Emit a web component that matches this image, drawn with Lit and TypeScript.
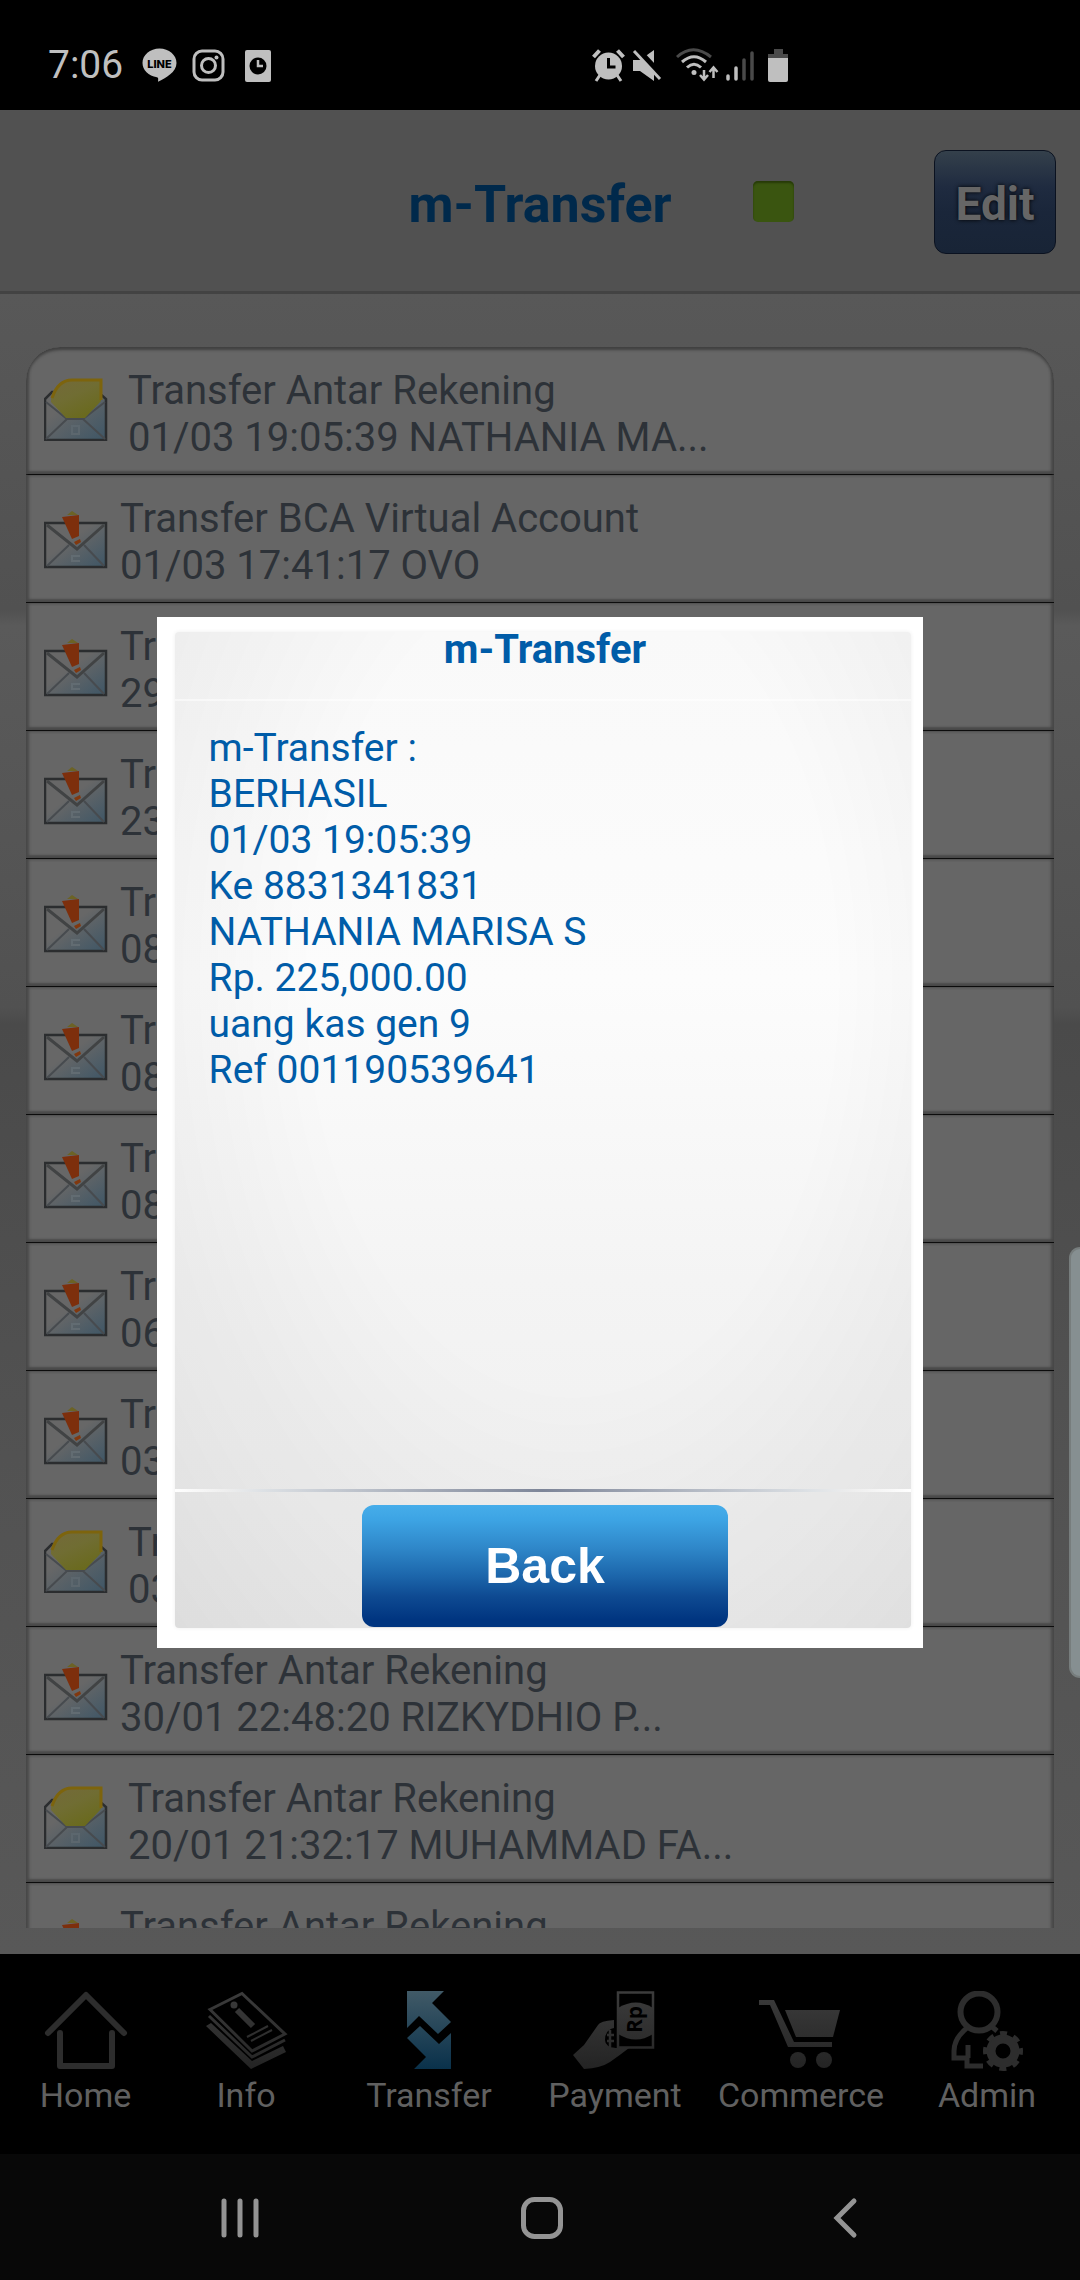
import { LitElement, html, css, svg } from "lit";
import { customElement, property } from "lit/decorators.js";

interface Entry {
  title: string;
  detail: string;
  opened?: boolean;
}

const ENTRIES: Entry[] = [
  { title: "Transfer Antar Rekening", detail: "01/03 19:05:39 NATHANIA MA...", opened: true },
  { title: "Transfer BCA Virtual Account", detail: "01/03 17:41:17 OVO" },
  { title: "Transfer", detail: "29/02" },
  { title: "Transfer", detail: "23/02" },
  { title: "Transfer", detail: "08/02" },
  { title: "Transfer", detail: "08/02" },
  { title: "Transfer", detail: "08/02" },
  { title: "Transfer", detail: "06/02" },
  { title: "Transfer", detail: "03/02" },
  { title: "Transfer", detail: "03/02", opened: true },
  { title: "Transfer Antar Rekening", detail: "30/01 22:48:20 RIZKYDHIO P..." },
  { title: "Transfer Antar Rekening", detail: "20/01 21:32:17 MUHAMMAD FA...", opened: true },
  { title: "Transfer Antar Rekening", detail: "" },
];

const RECEIPT = [
  "m-Transfer :",
  "BERHASIL",
  "01/03 19:05:39",
  "Ke 8831341831",
  "NATHANIA MARISA S",
  "Rp. 225,000.00",
  "uang kas gen 9",
  "Ref 001190539641",
];

/* ---------- status bar ---------- */

@customElement("status-bar")
export class StatusBar extends LitElement {
  static styles = css`
    :host {
      display: block;
      background: #000;
      color: #bfbfbf;
    }
    .bar {
      display: flex;
      align-items: center;
      height: 110px;
      padding: 20px 48px 0;
      box-sizing: border-box;
      font: 39px/40px Roboto, sans-serif;
    }
    .time {
      width: 94px;
    }
    .apps {
      display: flex;
      gap: 15px;
      width: 450px;
    }
    .system {
      display: flex;
      align-items: center;
      gap: 7px;
    }
    .wifi {
      margin-left: 7px;
    }
    .battery {
      margin-left: 6px;
    }
    svg {
      display: block;
    }
  `;

  render() {
    return html`
      <div class="bar">
        <span class="time">7:06</span>
        <div class="apps">
          <svg width="35" height="34" viewBox="0 0 35 34">
            <path fill="#bfbfbf" d="M17.500 .5C8 .5.500 7 .500 15c0 7 6 13 14.500 14.200 1.500.3 1.300 1.600 1 4.500C24 30 34.500 24 34.500 15 34.500 7 27 .5 17.500.5z" />
            <text x="17.500" y="19.500" text-anchor="middle" font-family="Inter, sans-serif" font-weight="800" font-size="11" fill="#000">LINE</text>
          </svg>
          <svg width="33" height="34" viewBox="0 0 33 34" fill="none" stroke="#bfbfbf">
            <rect x="2" y="3" width="29" height="29" rx="8" stroke-width="3" />
            <circle cx="16.500" cy="17.500" r="7" stroke-width="3" />
            <circle cx="24.500" cy="9.500" r="2" fill="#bfbfbf" stroke="none" />
          </svg>
          <svg width="36" height="34" viewBox="0 0 36 34">
            <rect x="5" y="2" width="26" height="32" rx="2" fill="#bfbfbf" />
            <circle cx="18" cy="18" r="8.500" fill="#000" />
            <path d="M18 12v6h5" fill="none" stroke="#bfbfbf" stroke-width="2.500" />
          </svg>
        </div>
        <div class="system">
          <svg width="33" height="34" viewBox="0 0 33 34" fill="none" stroke="#bfbfbf">
            <circle cx="16.500" cy="18" r="13.500" fill="#bfbfbf" stroke="none" />
            <path d="M1.500 9l6-6.500M31.500 9l-6-6.500" stroke-width="4" />
            <path d="M8 27l-4 6M25 27l4 6" stroke-width="3" />
            <path d="M16.500 10v9h7" stroke="#000" stroke-width="3" />
          </svg>
          <svg width="30" height="34" viewBox="0 0 30 34">
            <path d="M1 12h7L22 2v31L8 23H1z" fill="#bfbfbf" />
            <path d="M3 -1L31 29" stroke="#000" stroke-width="6" />
            <path d="M2 3L28 31" stroke="#bfbfbf" stroke-width="3" />
          </svg>
          <svg class="wifi" width="43" height="34" viewBox="0 0 43 34" fill="none" stroke="#bfbfbf" stroke-width="3">
            <path d="M1 9q16-14.500 34 0" stroke="#4a4a4a" />
            <path d="M6 14q12-10.500 24 0M11 19.500q7-6.500 14 0" />
            <circle cx="18" cy="24.500" r="2.500" fill="#bfbfbf" stroke="none" />
            <path d="M28 22v9M24 27l4 4.500 4-4.500M37.500 30v-10M33.500 24l4-4.500 4 4.500" stroke-width="2.500" />
          </svg>
          <svg width="28" height="34" viewBox="0 0 28 34" fill="none" stroke-width="3.500" stroke-linecap="round">
            <path d="M2 28v3M10 20v11" stroke="#bfbfbf" />
            <path d="M18 12v19M26 5v26" stroke="#4a4a4a" />
          </svg>
          <svg class="battery" width="22" height="34" viewBox="0 0 22 34">
            <path d="M7 1h9v5h5v6H1V6h6z" fill="#4a4a4a" />
            <path d="M1 10h20v22q0 2-2 2H3q-2 0-2-2z" fill="#bfbfbf" />
          </svg>
        </div>
      </div>
    `;
  }
}

/* ---------- history row ---------- */

@customElement("history-row")
export class HistoryRow extends LitElement {
  @property({ attribute: false }) entry!: Entry;

  static styles = css`
    :host {
      display: block;
    }
    .row {
      display: flex;
      align-items: flex-end;
      width: 100%;
      height: 128px;
      padding: 0 18px 13px;
      box-sizing: border-box;
      border: 0;
      border-bottom: 1px solid #0c0c0c;
      background: #666;
      box-shadow: inset 3px 0 3px #484848, inset -3px 0 3px #484848, inset 0 -3px 2px #4c4c4c;
      color: #2d3238;
      text-align: left;
      font: 40px/47px Roboto, sans-serif;
    }
    .icon {
      display: block;
      flex: none;
      margin-bottom: 20px;
    }
    .text {
      padding-left: 12px;
      white-space: pre;
    }
    .opened .text {
      padding-left: 20px;
    }
    .text span {
      display: block;
      height: 47px;
    }
  `;

  private closedIcon() {
    return svg`
      <linearGradient id="paper" x1="0" y1="0" x2="1" y2="1">
        <stop offset="0.400" stop-color="#676767" /><stop offset="1" stop-color="#3e5666" />
      </linearGradient>
      <rect x="1" y="17" width="61" height="44" fill="url(#paper)" stroke="#2b2d2f" stroke-width="2.500" />
      <path d="M3 60l22-21M60 60L40 39" stroke="#474b4f" stroke-width="2" />
      <path d="M3 19l30 24 27-24" fill="none" stroke="#414344" stroke-width="3" />
      <path d="M36 50h-8v5h8" fill="none" stroke="#626c72" stroke-width="2" />
      <path d="M23 9l5-4 6 4z" fill="#6c6325" />
      <path d="M18 11l17-2v21l-7 3z" fill="#7d2f0c" />
      <path d="M30 36l6-3 1 3-5 3z" fill="#81380f" />
    `;
  }

  private openIcon() {
    return svg`
      <linearGradient id="paper" x1="0" y1="0" x2="1" y2="1">
        <stop offset="0.300" stop-color="#676767" /><stop offset="1" stop-color="#3e5666" />
      </linearGradient>
      <linearGradient id="flap" x1="0" y1="0" x2="0.600" y2="1">
        <stop offset="0" stop-color="#74693a" /><stop offset="0.500" stop-color="#706d33" /><stop offset="1" stop-color="#6a6a1e" />
      </linearGradient>
      <path d="M1 62V21l7-7h46l8 7v41z" fill="url(#paper)" stroke="#2b2d2f" stroke-width="2.500" />
      <path d="M2 24l21 17h16l22-17M2 61l21-20M61 61L39 41" fill="none" stroke="#474b4f" stroke-width="2" />
      <path d="M7 20Q12 1 28 1H57v22L41 40H22L7 24z" fill="url(#flap)" />
      <path d="M8 20Q14 2 28 2H57v20" fill="none" stroke="#7d640d" stroke-width="3" />
      <path d="M28 48h7v8h-7z" fill="none" stroke="#5c676e" stroke-width="2" />
    `;
  }

  render() {
    const { title, detail, opened } = this.entry;
    return html`
      <button class="row ${opened ? "opened" : ""}">
        <svg class="icon" width="64" height="63" viewBox="0 0 64 63">
          ${opened ? this.openIcon() : this.closedIcon()}
        </svg>
        <span class="text"><span>${title}</span><span>${detail}</span></span>
      </button>
    `;
  }
}

/* ---------- bottom tabs ---------- */

const fade = svg`
  <linearGradient id="fade" gradientUnits="userSpaceOnUse" x1="0" y1="0" x2="0" y2="80">
    <stop offset="0" stop-color="#3c3c3c" /><stop offset="1" stop-color="#232323" />
  </linearGradient>`;

const TAB_ICONS: Record<string, unknown> = {
  Home: svg`
    <g fill="none" stroke="#2d2d2d" stroke-width="6" stroke-linecap="round" stroke-linejoin="round">
      <path d="M4 42L42 4l38 38M16 42v33h52V42" />
    </g>`,
  Info: svg`
    <g fill="none" stroke="url(#fade)" stroke-width="3">
      <path d="M6 18.500L38 2.500 81 43 48 60z" />
      <path d="M5 25l43 41 33-17" />
      <path d="M33 19l16 16" stroke-width="6" />
      <path d="M43 46l21-11M47 50l21-11" stroke-width="2" />
    </g>
    <path d="M2 35l5-3 41 38 31-15 3 6-35 17z" fill="url(#fade)" />
    <circle cx="30" cy="14" r="3.500" fill="url(#fade)" />`,
  Transfer: svg`
    <linearGradient id="blue" gradientUnits="userSpaceOnUse" x1="0" y1="0" x2="0" y2="80">
      <stop offset="0" stop-color="#415a67" /><stop offset="1" stop-color="#08304a" />
    </linearGradient>
    <path fill="url(#blue)" d="M20 0h37L45 12l19 19-13 12-19-18-12 12z" />
    <path fill="url(#blue)" d="M64 78H27l12-12-19-19 13-12 19 18 12-11z" />`,
  Payment: svg`
    <path d="M0 64L11 54 25 34q2-4 16-5v8q-9 2-9 12 0 7 11 8h13Q47 64 37 71q-9 6-26 7z" fill="url(#fade)" />
    <path d="M34 44h7M34 50h7M37 39v17" stroke="url(#fade)" stroke-width="2.500" />
    <rect x="45" y="1.500" width="35" height="55" fill="#000" stroke="url(#fade)" stroke-width="2.500" />
    <path d="M45 17q18-11 35 0v26q-17 11-35 0z" fill="url(#fade)" />
    <text transform="translate(69 42) rotate(-90)" font-family="Open Sans, sans-serif" font-weight="700" font-size="21" fill="#000">Rp</text>`,
  Commerce: svg`
    <g fill="url(#fade)">
      <path d="M0 9h15l20 42h38v5H29L11 14H0z" />
      <path d="M26 19h55l-7 27H37z" />
      <circle cx="39" cy="69" r="8" /><circle cx="65" cy="69" r="8" />
    </g>`,
  Admin: svg`
    <g fill="none" stroke="#2d2d2d" stroke-width="6">
      <circle cx="34" cy="21" r="18.500" />
      <path d="M23 36Q9 47 9 60v7h13v8h16M23 54v13M45 34l7 6" stroke-width="5" />
      <circle cx="58" cy="60" r="12" stroke-width="9" />
      <circle cx="58" cy="60" r="17.500" stroke-width="5" stroke-dasharray="7 6.740" stroke-dashoffset="3.500" />
    </g>`,
};

@customElement("tab-bar")
export class TabBar extends LitElement {
  static styles = css`
    :host {
      display: block;
      background: #000;
    }
    .tabs {
      display: grid;
      grid-template-columns: 141fr 180fr 186fr 186fr 186fr 186fr;
      padding: 37px 0 39px 15px;
    }
    .tab {
      display: flex;
      flex-direction: column;
      align-items: center;
      gap: 4px;
      color: #606060;
      text-decoration: none;
      font: 34px/40px Roboto, sans-serif;
    }
    svg {
      display: block;
    }
  `;

  render() {
    return html`
      <nav class="tabs">
        ${Object.entries(TAB_ICONS).map(
          ([label, icon]) => html`
            <a class="tab" href="#${label.toLowerCase()}">
              <svg width="84" height="80" viewBox="0 0 84 80">${fade}${icon}</svg>
              ${label}
            </a>
          `
        )}
      </nav>
    `;
  }
}

/* ---------- receipt dialog ---------- */

@customElement("receipt-dialog")
export class ReceiptDialog extends LitElement {
  static styles = css`
    :host {
      display: block;
      width: 71%;
      font-family: Roboto, sans-serif;
      color: #005ca8;
    }
    .dialog {
      padding: 15px 12px 20px 18px;
      background: #fff;
    }
    .panel {
      display: flex;
      flex-direction: column;
      border-radius: 4px;
      background: radial-gradient(ellipse 78% 90% at 54% 35%, transparent 45%, rgba(0, 0, 0, 0.07) 100%),
        linear-gradient(#f9f9f9, #fcfcfc 35%, #f4f4f4 65%, #eee);
      box-shadow: 0 0 4px #eee;
    }
    .title {
      margin: 0;
      padding: 0 0 19px 4px;
      height: 69px;
      box-sizing: border-box;
      border-bottom: 2px solid rgba(255, 255, 255, 0.5);
      text-align: center;
      font-size: 40px;
      font-weight: 700;
      line-height: 36px;
    }
    .body {
      min-height: 788px;
      padding: 0 34px;
      font-size: 39px;
      line-height: 46px;
    }
    .lines {
      margin: 0;
      padding: 24px 0;
    }
    .lines span {
      display: block;
    }
    .actions {
      display: flex;
      justify-content: center;
      padding: 13px 0 1px 4px;
      border-top: 3px solid;
      border-image: linear-gradient(90deg, #fff, #eee 7%, #dde1e5 12%, #7d8598 50%, #dde1e5 86%, #eee 92%, #fff) 1;
    }
    .back {
      width: 50%;
      height: 122px;
      border: 0;
      border-radius: 12px;
      background: linear-gradient(#46adea, #3da4e4 12%, #2e86c8 36%, #1c66ab 58%, #0e4a92 75%, #003580 94%);
      color: #fff;
      font: 700 50px/56px "Liberation Sans", sans-serif;
    }
  `;

  render() {
    return html`
      <section class="dialog" role="dialog" aria-labelledby="title">
        <div class="panel">
          <h2 class="title" id="title">m-Transfer</h2>
          <div class="body">
            <p class="lines">${RECEIPT.map((line) => html`<span>${line}</span>`)}</p>
          </div>
          <div class="actions"><button class="back">Back</button></div>
        </div>
      </section>
    `;
  }
}

/* ---------- page ---------- */

@customElement("app-root")
export class AppRoot extends LitElement {
  static styles = css`
    :host {
      display: block;
      font-family: Roboto, sans-serif;
    }
    .screen {
      display: flex;
      flex-direction: column;
      height: 100vh;
      overflow: hidden;
    }
    .app {
      position: relative;
      display: flex;
      flex: 1;
      flex-direction: column;
      min-height: 0;
    }
    .header {
      display: grid;
      grid-template-columns: 1fr auto 1fr;
      align-items: center;
      flex: none;
      height: 184px;
      padding-top: 2px;
      box-sizing: border-box;
      border-bottom: 3px solid #434343;
      background: #515151;
    }
    .heading {
      grid-column: 2;
      margin: 0;
      padding-top: 6px;
      color: #00294b;
      font-size: 52px;
      line-height: 60px;
    }
    .tools {
      display: flex;
      align-items: center;
      justify-content: space-between;
      padding: 0 24px 0 81px;
    }
    .signal {
      width: 41px;
      height: 41px;
      border-radius: 5px;
      background: #3a5510;
      box-shadow: inset 0 2px 2px #263a08;
    }
    .edit {
      width: 122px;
      height: 104px;
      padding: 4px 0 0;
      border: 1px solid #0b1220;
      border-radius: 12px;
      background: linear-gradient(#34404b, #1f2b40 35%, #1a263a 60%, #182436);
      color: #666;
      text-shadow: 0 0 4px #000;
      font: 700 46px/50px Roboto, sans-serif;
    }
    .content {
      flex: 1;
      min-height: 0;
      padding: 53px 26px 26px;
      background: linear-gradient(
        #585858,
        #515151 19%,
        #5a5a5a 20%,
        #515151 43%,
        #4a4a4a 44%,
        #525252 70%,
        #585858
      );
    }
    .list {
      height: 100%;
      margin: 0;
      padding: 0;
      overflow: hidden;
      border-radius: 34px 34px 0 0;
      list-style: none;
    }
    .item:first-child {
      border-radius: 34px 34px 0 0;
      overflow: hidden;
      position: relative;
    }
    .item:first-child::after {
      content: "";
      position: absolute;
      inset: 0;
      border-radius: 34px 34px 0 0;
      box-shadow: inset 0 3px 3px #414141;
      pointer-events: none;
    }
    .overlay {
      position: absolute;
      inset: 0;
      display: flex;
      align-items: center;
      justify-content: center;
    }
    .edge-panel {
      position: absolute;
      right: 0;
      top: 1137px;
      width: 11px;
      height: 431px;
      box-sizing: border-box;
      border: 2px solid #777d7d;
      border-right: 0;
      border-radius: 11px 0 0 11px;
      background: #868f91;
    }
    .system-nav {
      display: grid;
      grid-template-columns: repeat(3, 1fr);
      flex: none;
      height: 126px;
      padding: 2px 84px 0 89px;
      box-sizing: border-box;
      background: #080808;
    }
    .key {
      display: flex;
      align-items: center;
      justify-content: center;
      border: 0;
      background: none;
    }
  `;

  render() {
    return html`
      <div class="screen">
        <status-bar></status-bar>
        <div class="app">
          <header class="header">
            <h1 class="heading">m-Transfer</h1>
            <div class="tools">
              <span class="signal"></span>
              <button class="edit">Edit</button>
            </div>
          </header>
          <main class="content">
            <ul class="list">
              ${ENTRIES.map((entry) => html`<li class="item"><history-row .entry=${entry}></history-row></li>`)}
            </ul>
          </main>
          <tab-bar></tab-bar>
          <div class="overlay"><receipt-dialog></receipt-dialog></div>
          <div class="edge-panel"></div>
        </div>
        <nav class="system-nav">
          <button class="key" aria-label="Recents">
            <svg width="42" height="44" viewBox="0 0 42 44" stroke="#949494" stroke-width="5" stroke-linecap="round">
              <path d="M5 5v34M21 5v34M37 5v34" />
            </svg>
          </button>
          <button class="key" aria-label="Home">
            <svg width="44" height="44" viewBox="0 0 44 44" fill="none" stroke="#949494" stroke-width="5">
              <rect x="3.500" y="3.500" width="37" height="37" rx="11" />
            </svg>
          </button>
          <button class="key" aria-label="Back">
            <svg width="28" height="44" viewBox="0 0 28 44" fill="none" stroke="#949494" stroke-width="5" stroke-linecap="round">
              <path d="M23 5L6 22l17 17" />
            </svg>
          </button>
        </nav>
      </div>
    `;
  }
}
